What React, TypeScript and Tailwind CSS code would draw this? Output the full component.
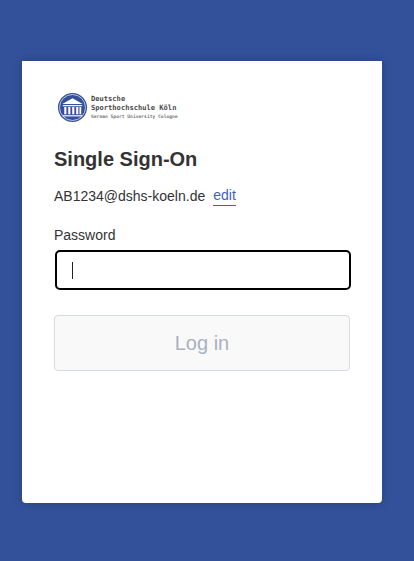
const sans = "font-['Liberation_Sans',Arial,sans-serif]";

function Logo() {
  return (
    <div className="ml-[3px] flex h-[32px] items-center gap-[3px]">
      <svg width="31" height="31" viewBox="0 0 32 32" className="shrink-0">
        <circle cx="16" cy="16" r="15" fill="#34509a" />
        <circle cx="16" cy="16" r="13.4" fill="none" stroke="#ffffff" strokeWidth="0.7" />
        <path d="M5.5 12.5 16 6.5l10.5 6z" fill="#ffffff" />
        <rect x="6" y="13.5" width="20" height="1.2" fill="#ffffff" />
        <rect x="7.5" y="15.5" width="2.2" height="7.5" fill="#ffffff" />
        <rect x="11.6" y="15.5" width="2.2" height="7.5" fill="#ffffff" />
        <rect x="15.7" y="15.5" width="2.2" height="7.5" fill="#ffffff" />
        <rect x="19.8" y="15.5" width="2.2" height="7.5" fill="#ffffff" />
        <rect x="23.2" y="15.5" width="1.8" height="7.5" fill="#ffffff" />
        <rect x="6" y="24" width="20" height="1.2" fill="#ffffff" />
      </svg>
      <div className="flex flex-col font-['DejaVu_Sans_Mono',monospace] text-[#4a4a4a]">
        <span className="text-[7.1px] leading-[9px] font-bold">Deutsche</span>
        <span className="text-[7.1px] leading-[9px] font-bold whitespace-nowrap">Sporthochschule Köln</span>
        <span className="mt-[1px] text-[4.65px] leading-[7px] font-bold whitespace-nowrap text-[#777777]">German Sport University Cologne</span>
      </div>
    </div>
  );
}

export default function App() {
  return (
    <div className={`min-h-[561px] bg-[#32519a] pt-[61px] pb-[58px] pl-[22px] ${sans}`}>
      <div className="flex h-[442px] w-[360px] flex-col rounded-b-[4px] bg-white px-[32px] pt-[30px] shadow-[0_0_8px_rgba(0,0,0,0.2)]">
        <Logo />
        <h1 className="mt-[22px] text-[20px] leading-[28px] font-bold text-[#333333]">Single Sign-On</h1>
        <div className="mt-[12px] flex h-[22px] items-center text-[14px] text-[#333333]">
          <span>AB1234@dshs-koeln.de</span>
          <a className="ml-[8px] border-b border-[#3f5fd0] leading-[19px] text-[#3f5fc4]">edit</a>
        </div>
        <label className="mt-[18px] text-[14px] leading-[20px] text-[#333333]">Password</label>
        <div className="mt-[5px] ml-[1px] flex h-[40px] w-[296px] items-center rounded-[5px] border-2 border-black px-[15px]">
          <span className="h-[17px] w-px bg-[#222222]" />
        </div>
        <button className="mt-[25px] h-[56px] rounded-[4px] border border-[#d5d9e0] bg-[#f9f9fa] text-[20px] text-[#a9b1c0]">Log in</button>
      </div>
    </div>
  );
}
